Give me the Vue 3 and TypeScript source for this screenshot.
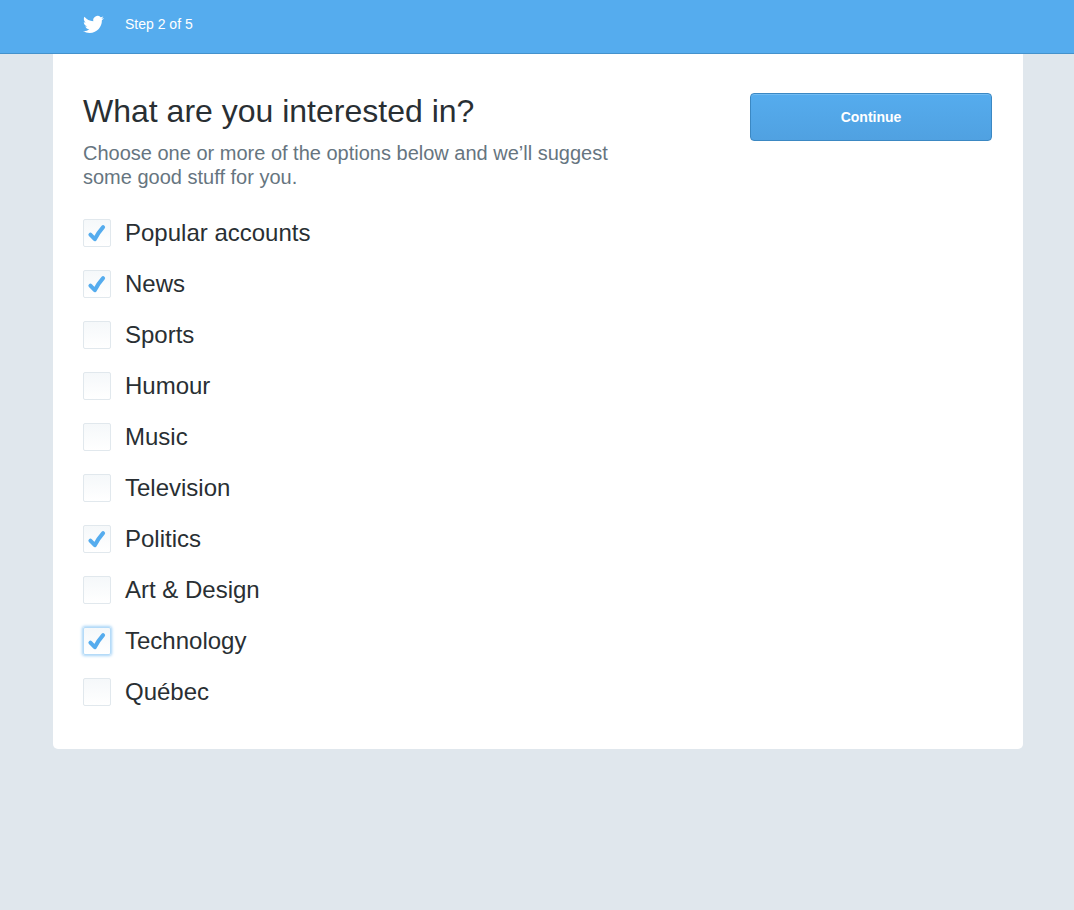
<script setup lang="ts">
import { ref } from 'vue'

interface Interest {
  id: string
  label: string
  checked: boolean
  highlighted?: boolean
}

const step = 2
const totalSteps = 5

const interests = ref<Interest[]>([
  { id: 'popular', label: 'Popular accounts', checked: true },
  { id: 'news', label: 'News', checked: true },
  { id: 'sports', label: 'Sports', checked: false },
  { id: 'humour', label: 'Humour', checked: false },
  { id: 'music', label: 'Music', checked: false },
  { id: 'television', label: 'Television', checked: false },
  { id: 'politics', label: 'Politics', checked: true },
  { id: 'art', label: 'Art & Design', checked: false },
  { id: 'technology', label: 'Technology', checked: true, highlighted: true },
  { id: 'quebec', label: 'Québec', checked: false },
])
</script>

<template>
  <div class="page">
    <header class="topbar">
      <div class="topbar-inner">
        <svg class="bird" viewBox="0 0 24 24" role="img" aria-label="Twitter">
          <path
            d="M23.953 4.57a10 10 0 01-2.825.775 4.958 4.958 0 002.163-2.723c-.951.555-2.005.959-3.127 1.184a4.92 4.92 0 00-8.384 4.482C7.69 8.095 4.067 6.13 1.64 3.162a4.822 4.822 0 00-.666 2.475c0 1.71.87 3.213 2.188 4.096a4.904 4.904 0 01-2.228-.616v.06a4.923 4.923 0 003.946 4.827 4.996 4.996 0 01-2.212.085 4.936 4.936 0 004.604 3.417 9.867 9.867 0 01-6.102 2.105c-.39 0-.779-.023-1.17-.067a13.995 13.995 0 007.557 2.209c9.053 0 13.998-7.496 13.998-13.985 0-.21 0-.42-.015-.63A9.935 9.935 0 0024 4.59z"
          />
        </svg>
        <span class="step">Step {{ step }} of {{ totalSteps }}</span>
      </div>
    </header>

    <div class="content">
      <main class="card">
        <div class="intro">
          <div class="heading">
            <h1>What are you interested in?</h1>
            <p>Choose one or more of the options below and we’ll suggest some good stuff for you.</p>
          </div>
          <button type="button" class="continue">Continue</button>
        </div>

        <ul class="options">
          <li v-for="item in interests" :key="item.id">
            <label class="option" :for="item.id">
              <span class="box" :class="{ highlighted: item.highlighted }">
                <input :id="item.id" v-model="item.checked" type="checkbox" />
                <svg v-if="item.checked" class="tick" viewBox="0 0 28 28" aria-hidden="true">
                  <path d="M7.4 15.6L11.8 20.2C14 16 16.7 12 20.1 8.2" />
                </svg>
              </span>
              <span>{{ item.label }}</span>
            </label>
          </li>
        </ul>
      </main>
    </div>
  </div>
</template>

<style>
body {
  background: #e0e7ed;
}
</style>

<style scoped>
.page {
  min-height: 100vh;
  color: #292f33;
  font-family: Arial, "Liberation Sans", sans-serif;
}

.topbar,
.content {
  padding: 0 51px 0 53px;
}

.topbar {
  box-sizing: border-box;
  height: 54px;
  background: #55acee;
  border-bottom: 1px solid #4492cc;
}

.topbar-inner,
.card {
  box-sizing: border-box;
  max-width: 970px;
  margin: 0 auto;
}

.topbar-inner {
  display: flex;
  align-items: center;
  height: 48px;
  padding: 0 30px;
}

.bird {
  width: 21px;
  height: 21px;
  margin-right: 21px;
  fill: #fff;
}

.step {
  color: #fff;
  font-size: 14px;
  line-height: 20px;
}

.card {
  padding: 39px 31px 43px 30px;
  background: #fff;
  border-radius: 0 0 5px 5px;
}

.intro {
  display: flex;
  justify-content: space-between;
  align-items: flex-start;
  gap: 40px;
}

.heading {
  max-width: 560px;
}

h1 {
  margin: 0;
  font-size: 32px;
  font-weight: normal;
  line-height: 36px;
}

p {
  margin: 12px 0 0;
  color: #66757f;
  font-size: 20px;
  line-height: 24px;
}

.continue {
  flex: none;
  width: 242px;
  height: 48px;
  border: 1px solid #3b88c3;
  border-radius: 4px;
  background: linear-gradient(#55acee, #50a1e1);
  box-shadow: inset 0 1px 0 #72bcf3;
  color: #fff;
  font: bold 14px/20px Arial, "Liberation Sans", sans-serif;
  cursor: pointer;
}

.options {
  display: flex;
  flex-direction: column;
  align-items: flex-start;
  gap: 23px;
  margin: 30px 0 0;
  padding: 0;
  list-style: none;
}

.option {
  display: flex;
  align-items: center;
  gap: 14px;
  font-size: 24px;
  line-height: 28px;
  cursor: pointer;
}

.box {
  display: grid;
  width: 28px;
  height: 28px;
}

.box > * {
  grid-area: 1 / 1;
}

.box input {
  appearance: none;
  box-sizing: border-box;
  width: 28px;
  height: 28px;
  margin: 0;
  border: 1px solid #e1e8ed;
  border-radius: 2px;
  background: linear-gradient(#f5f8fa, #fff);
}

.box.highlighted input {
  border-color: #b5dbf8;
  box-shadow: 0 0 3px 1px #a5d3f7;
}

.tick {
  width: 28px;
  height: 28px;
  fill: none;
  stroke: #55acee;
  stroke-width: 4;
  stroke-linecap: round;
  stroke-linejoin: round;
  pointer-events: none;
}
</style>
